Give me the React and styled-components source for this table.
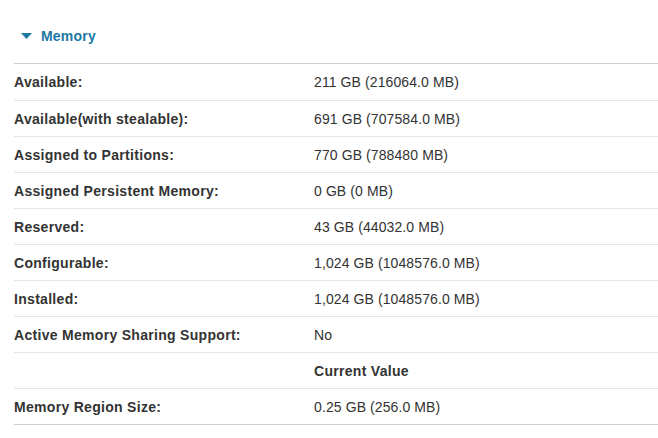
import React from "react";
import styled, { createGlobalStyle } from "styled-components";

const Global = createGlobalStyle`
  html, body { margin: 0; padding: 0; background: #fff; }
  body { font-family: "Liberation Sans", Arial, sans-serif; }
`;

const Page = styled.div`
  padding: 0 0 0 14px;
  width: 658px;
  box-sizing: border-box;
`;

const Header = styled.div`
  display: flex;
  align-items: center;
  gap: 9px;
  height: 64px;
  box-sizing: border-box;
  padding: 9px 0 0 7px;
  border-bottom: 1px solid #cfcfcf;
  color: #1c78a5;
  font-size: 14px;
  font-weight: bold;
  letter-spacing: 0.2px;
  line-height: 16px;
`;

const Table = styled.div`
  display: flex;
  flex-direction: column;
  border-bottom: 1px solid #cfcfcf;
`;

const Row = styled.div`
  display: grid;
  grid-template-columns: 300px 1fr;
  height: 36px;
  align-items: center;
  box-sizing: border-box;
  border-top: ${(p) => (p.$first ? "none" : "1px solid #e6e6e6")};
  font-size: 14px;
  color: #333;
`;

const Label = styled.div`
  font-weight: bold;
  letter-spacing: 0.3px;
`;

const Value = styled.div`
  font-weight: ${(p) => (p.$bold ? "bold" : "normal")};
  letter-spacing: ${(p) => (p.$bold ? "0.3px" : "0.1px")};
`;

const rows = [
  ["Available:", "211 GB (216064.0 MB)"],
  ["Available(with stealable):", "691 GB (707584.0 MB)"],
  ["Assigned to Partitions:", "770 GB (788480 MB)"],
  ["Assigned Persistent Memory:", "0 GB (0 MB)"],
  ["Reserved:", "43 GB (44032.0 MB)"],
  ["Configurable:", "1,024 GB (1048576.0 MB)"],
  ["Installed:", "1,024 GB (1048576.0 MB)"],
  ["Active Memory Sharing Support:", "No"],
  ["", "Current Value", true],
  ["Memory Region Size:", "0.25 GB (256.0 MB)"],
];

export default function App() {
  return (
    <>
      <Global />
      <Page>
        <Header>
          <svg width="11" height="6" viewBox="0 0 11 6">
            <path d="M0 0 L11 0 L5.5 6 Z" fill="#1c78a5" />
          </svg>
          <span>Memory</span>
        </Header>
        <Table>
          {rows.map(([l, v, b], i) => (
            <Row key={i} $first={i === 0}>
              <Label>{l}</Label>
              <Value $bold={b}>{v}</Value>
            </Row>
          ))}
        </Table>
      </Page>
    </>
  );
}
